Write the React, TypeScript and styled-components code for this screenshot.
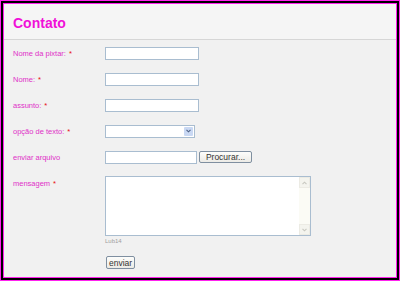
import React from 'react';
import styled, { createGlobalStyle } from 'styled-components';

const GlobalStyle = createGlobalStyle`
  html, body {
    margin: 0;
    padding: 0;
    background: #ffffff;
  }
  body {
    font-family: 'Liberation Sans', Arial, sans-serif;
  }
`;

const OuterFrame = styled.div`
  width: 400px;
  height: 281px;
  box-sizing: border-box;
  border: 1px solid #ff22ee;
`;

const MiddleFrame = styled.div`
  height: 100%;
  box-sizing: border-box;
  border: 2px solid #000000;
`;

const InnerFrame = styled.div`
  height: 100%;
  box-sizing: border-box;
  border: 1px solid #ff22ee;
  background: #f1f1f1;
  display: flex;
  flex-direction: column;
  overflow: hidden;
`;

const Header = styled.div`
  height: 36px;
  flex-shrink: 0;
  box-sizing: border-box;
  padding: 11px 0 0 9px;
  background: #f5f5f5;
  border-bottom: 1px solid #d6d6d6;
`;

const Title = styled.h1`
  margin: 0;
  font-family: 'Comic Sans MS', 'Liberation Sans', Arial, sans-serif;
  font-size: 14px;
  font-weight: bold;
  color: #f010d8;
  line-height: 17px;
`;

const Form = styled.form`
  padding: 0 0 0 9px;
  display: flex;
  flex-direction: column;
`;

const Row = styled.div<{ $top?: boolean }>`
  display: flex;
  flex-shrink: 0;
  align-items: ${(p) => (p.$top ? 'flex-start' : 'center')};
  height: ${(p) => (p.$top ? 'auto' : '26px')};
  margin-top: ${(p) => (p.$top ? '6px' : '0')};
`;

const Label = styled.label<{ $top?: boolean }>`
  width: 92px;
  flex-shrink: 0;
  font-family: 'Comic Sans MS', 'Liberation Sans', Arial, sans-serif;
  font-size: 7.5px;
  color: #e030c8;
  padding-top: ${(p) => (p.$top ? '3px' : '1px')};
`;

const Required = styled.span`
  color: #e81010;
  margin-left: 3px;
`;

const TextInput = styled.input`
  display: block;
  width: 94px;
  height: 13px;
  box-sizing: border-box;
  margin: 0;
  padding: 0 2px;
  border: 1px solid #a9bdd0;
  background: #ffffff;
  font-size: 8px;
`;

const SelectWrap = styled.div`
  position: relative;
  width: 90px;
  height: 13px;
`;

const Select = styled.select`
  display: block;
  appearance: none;
  width: 100%;
  height: 100%;
  box-sizing: border-box;
  margin: 0;
  padding: 0 2px;
  border: 1px solid #a9bdd0;
  background: #ffffff;
  font-size: 8px;
  border-radius: 0;
`;

const SelectArrow = styled.span`
  position: absolute;
  top: 2px;
  right: 2px;
  width: 9px;
  height: 9px;
  background: #c9d8f3;
  border-radius: 1px;
  display: flex;
  align-items: center;
  justify-content: center;
  pointer-events: none;
`;

const FileField = styled.div`
  display: flex;
  align-items: center;
  gap: 2px;
`;

const FileText = styled(TextInput)`
  width: 92px;
`;

const Button = styled.button<{ $w: number; $h: number }>`
  display: block;
  width: ${(p) => p.$w}px;
  height: ${(p) => p.$h}px;
  box-sizing: border-box;
  margin: 0;
  padding: 0;
  border: 1px solid #7f8fa0;
  border-radius: 2px;
  background: linear-gradient(#fdfdfb, #ecebe6);
  font-family: 'Liberation Sans', Arial, sans-serif;
  font-size: 8.5px;
  color: #333333;
  line-height: 10px;
`;

const MessageBlock = styled.div`
  display: flex;
  flex-direction: column;
`;

const TextAreaWrap = styled.div`
  position: relative;
  width: 206px;
  height: 60px;
`;

const TextArea = styled.textarea`
  display: block;
  width: 100%;
  height: 100%;
  box-sizing: border-box;
  margin: 0;
  padding: 0 14px 0 2px;
  border: 1px solid #a9bdd0;
  background: #ffffff;
  resize: none;
  overflow: hidden;
  font-size: 8px;
`;

const FakeScroll = styled.div`
  position: absolute;
  top: 1px;
  right: 1px;
  bottom: 1px;
  width: 11px;
  background: #fbfbf5;
  display: flex;
  flex-direction: column;
  justify-content: space-between;
  pointer-events: none;
`;

const ScrollButton = styled.span`
  width: 11px;
  height: 11px;
  box-sizing: border-box;
  border: 1px solid #ecebe4;
  background: #f4f4ee;
  display: flex;
  align-items: center;
  justify-content: center;
`;

const Credit = styled.span`
  font-size: 6px;
  color: #a0a0a0;
  margin-top: 2px;
`;

const SubmitRow = styled.div`
  padding: 12px 0 0 93px;
`;

const fields = [
  { id: 'pixtar', label: 'Nome da pixtar:' },
  { id: 'nome', label: 'Nome:' },
  { id: 'assunto', label: 'assunto:' },
];

const Chevron: React.FC<{ up?: boolean; color: string }> = ({ up, color }) => (
  <svg width="5" height="4" viewBox="0 0 5 4">
    <path
      d={up ? 'M0.5 3.2 L2.5 1.2 L4.5 3.2' : 'M0.5 0.8 L2.5 2.8 L4.5 0.8'}
      fill="none"
      stroke={color}
      strokeWidth="1.1"
    />
  </svg>
);

export default function App() {
  return (
    <>
      <GlobalStyle />
      <OuterFrame>
        <MiddleFrame>
          <InnerFrame>
            <Header>
              <Title>Contato</Title>
            </Header>
            <Form onSubmit={(e) => e.preventDefault()}>
              {fields.map((f) => (
                <Row key={f.id}>
                  <Label htmlFor={f.id}>
                    {f.label}
                    <Required>*</Required>
                  </Label>
                  <TextInput id={f.id} type="text" />
                </Row>
              ))}
              <Row>
                <Label htmlFor="opcao">
                  opção de texto:
                  <Required>*</Required>
                </Label>
                <SelectWrap>
                  <Select id="opcao">
                    <option value=""></option>
                  </Select>
                  <SelectArrow>
                    <Chevron color="#4d6185" />
                  </SelectArrow>
                </SelectWrap>
              </Row>
              <Row>
                <Label htmlFor="arquivo">enviar arquivo</Label>
                <FileField>
                  <FileText id="arquivo" type="text" readOnly />
                  <Button type="button" $w={53} $h={12}>Procurar...</Button>
                </FileField>
              </Row>
              <Row $top>
                <Label htmlFor="mensagem" $top>
                  mensagem
                  <Required>*</Required>
                </Label>
                <MessageBlock>
                  <TextAreaWrap>
                    <TextArea id="mensagem" />
                    <FakeScroll>
                      <ScrollButton>
                        <Chevron up color="#c8c8c0" />
                      </ScrollButton>
                      <ScrollButton>
                        <Chevron color="#c8c8c0" />
                      </ScrollButton>
                    </FakeScroll>
                  </TextAreaWrap>
                  <Credit>Lub14</Credit>
                </MessageBlock>
              </Row>
              <SubmitRow>
                <Button type="submit" $w={29} $h={13}>enviar</Button>
              </SubmitRow>
            </Form>
          </InnerFrame>
        </MiddleFrame>
      </OuterFrame>
    </>
  );
}
